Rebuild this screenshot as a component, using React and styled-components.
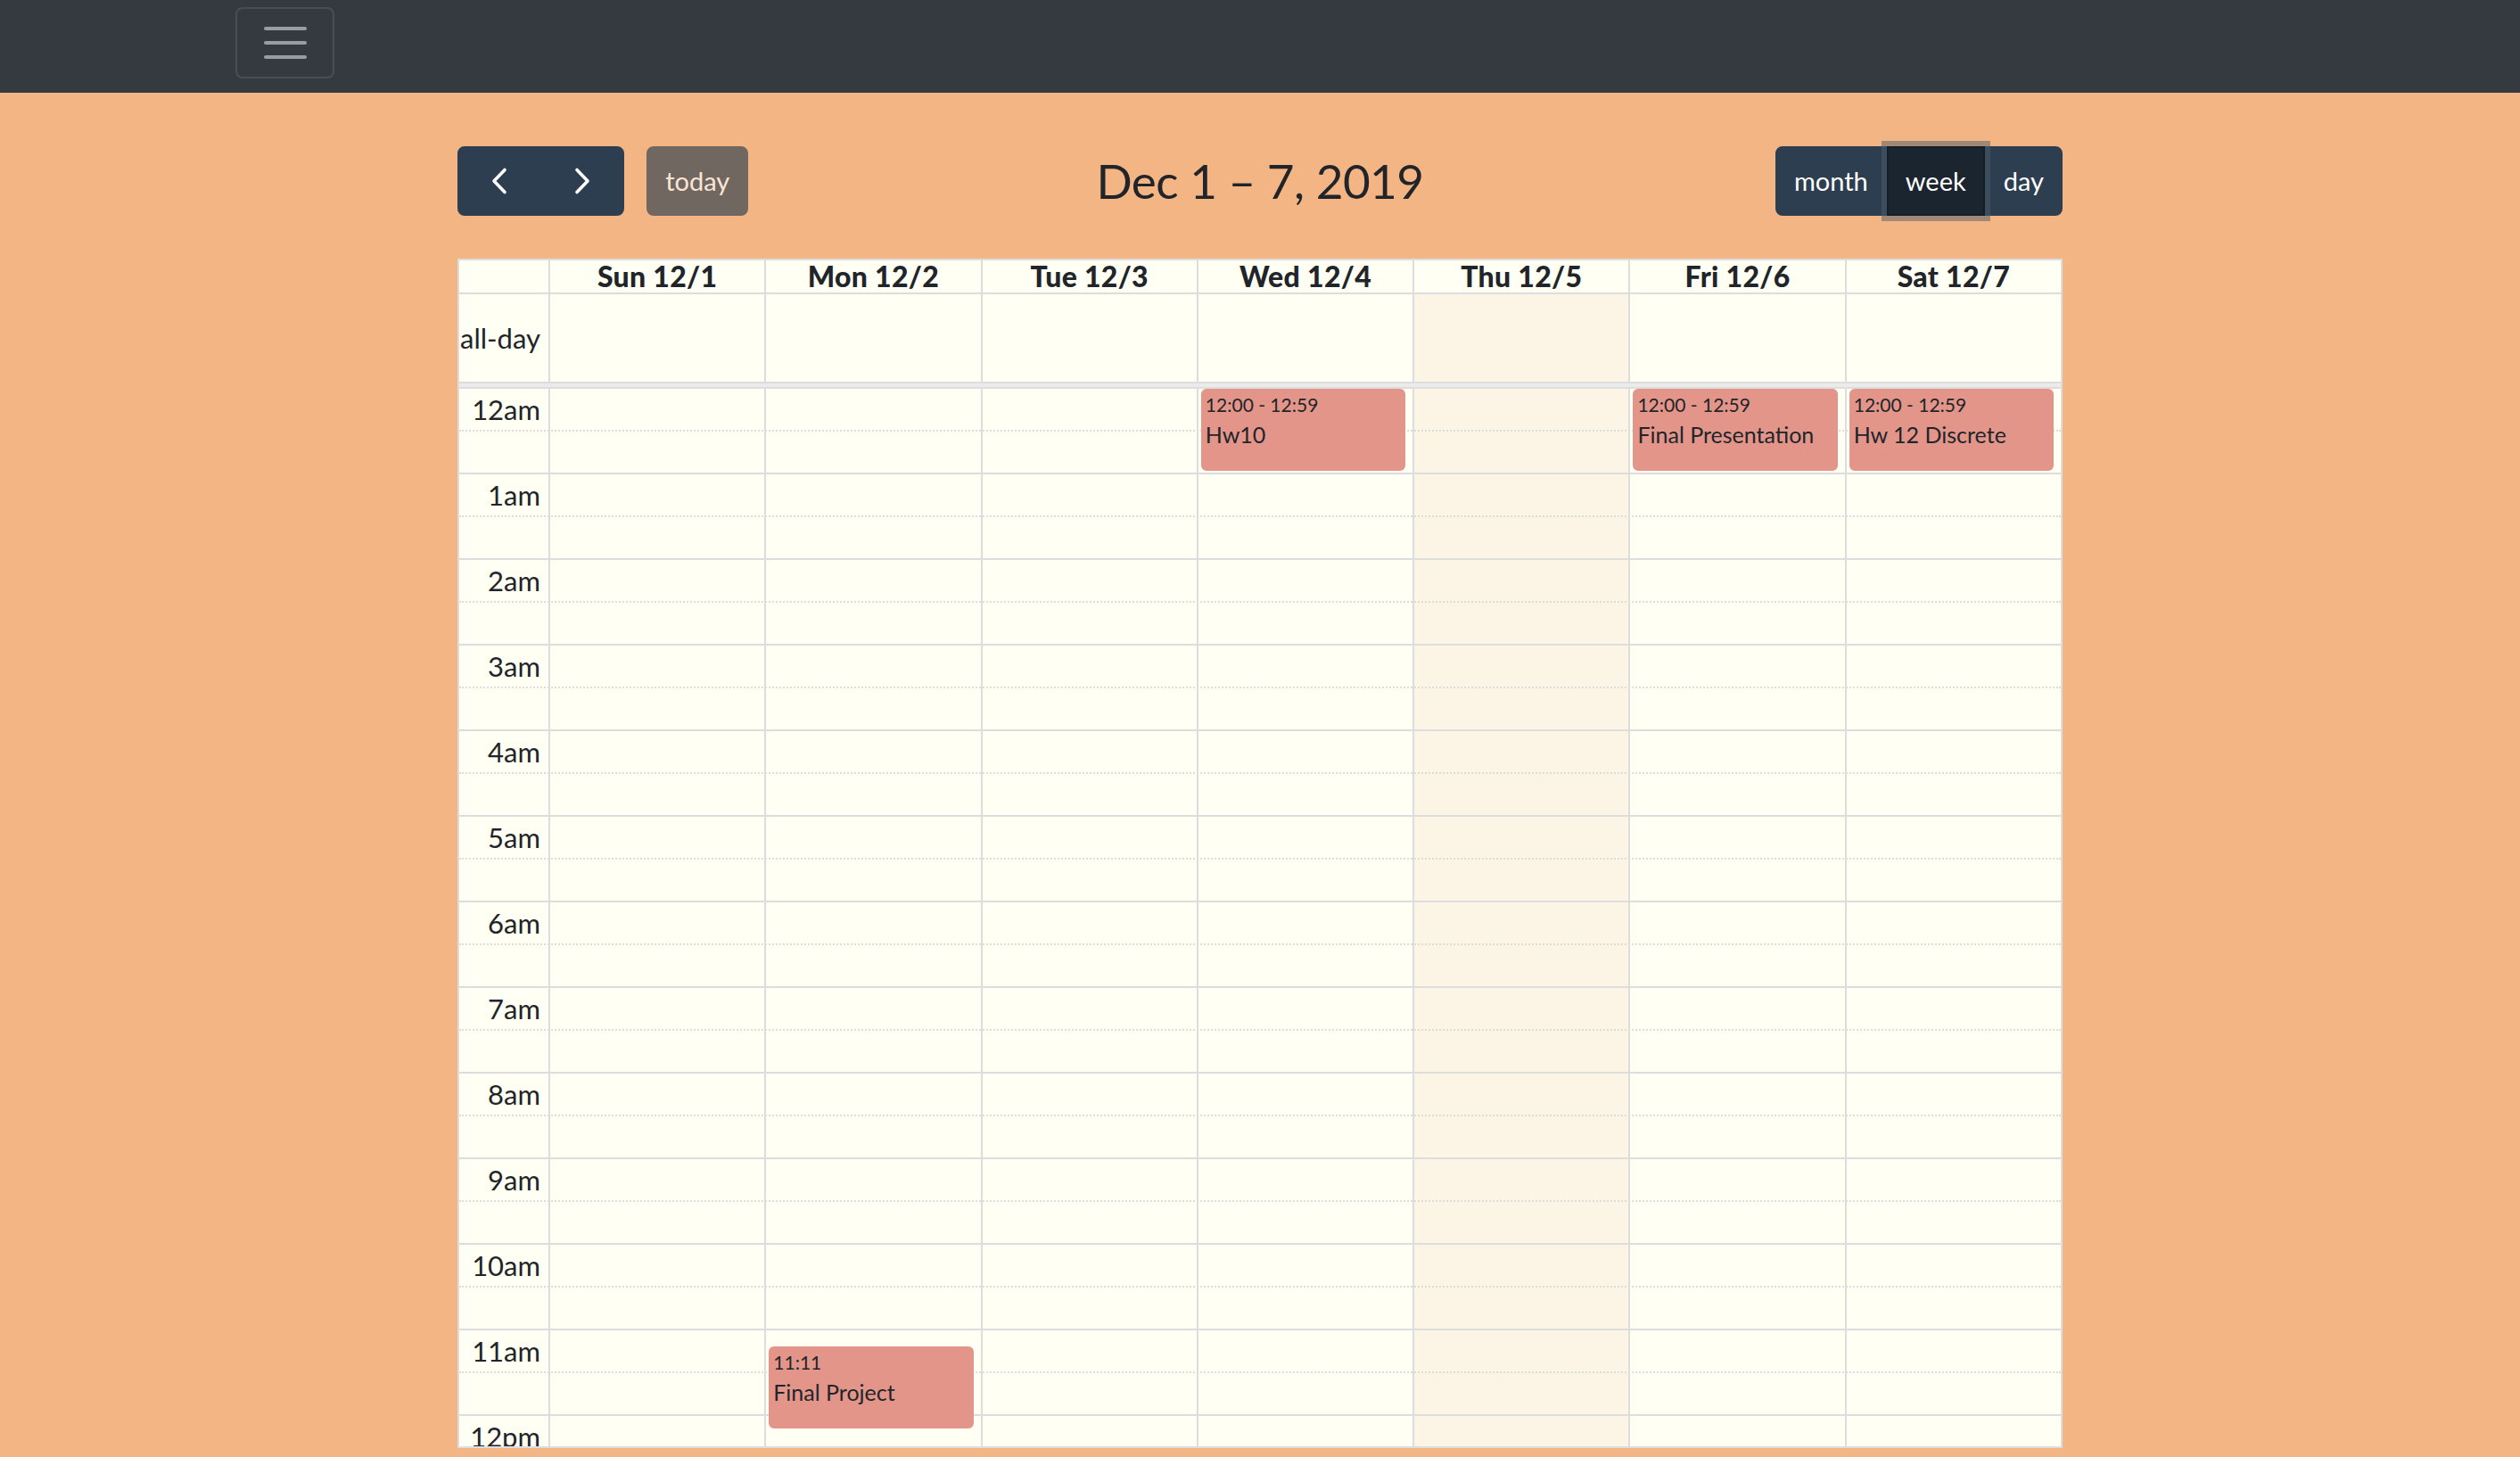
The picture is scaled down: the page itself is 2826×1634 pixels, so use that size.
import React from 'react';
import styled, { createGlobalStyle } from 'styled-components';

const GlobalStyle = createGlobalStyle`
  html, body { margin: 0; padding: 0; }
  body {
    background: #f3b583;
    font-family: Lato, "Liberation Sans", sans-serif;
    color: #212529;
  }
  *, *::before, *::after { box-sizing: border-box; }
`;

const Navbar = styled.nav`
  height: 104px;
  background: #343a40;
  display: flex;
  align-items: flex-start;
  padding: 8px 0 0 264px;
`;

const Toggler = styled.button`
  width: 111px;
  height: 80px;
  padding: 0;
  border: 2px solid rgba(255, 255, 255, 0.1);
  border-radius: 8px;
  background: transparent;
  display: flex;
  align-items: center;
  justify-content: center;
`;

const Calendar = styled.main`
  width: 1800px;
  margin: 60px auto 0;
`;

const Toolbar = styled.div`
  display: grid;
  grid-template-columns: 1fr auto 1fr;
  align-items: center;
  margin-bottom: 48px;
`;

const ToolbarSide = styled.div`
  display: flex;
  align-items: center;
  gap: 25px;
  justify-content: ${p => (p.$end ? 'flex-end' : 'flex-start')};
`;

const Title = styled.h2`
  margin: 0;
  font-size: 53px;
  font-weight: 400;
  line-height: 78px;
  color: #212529;
  letter-spacing: -0.5px;
`;

const ButtonGroup = styled.div`
  display: flex;
`;

const Button = styled.button`
  position: relative;
  font-family: inherit;
  font-size: 29px;
  line-height: 48px;
  height: 78px;
  padding: 12.8px ${p => (p.$icon ? '20.8px' : '19px')};
  border: 2px solid ${p => (p.$active ? '#151e27' : '#2c3e50')};
  background: ${p => (p.$active ? '#1a252f' : '#2c3e50')};
  color: #fff;
  border-radius: ${p =>
    p.$single ? '8px' : p.$first ? '8px 0 0 8px' : p.$last ? '0 8px 8px 0' : '0'};
  opacity: ${p => (p.$disabled ? 0.65 : 1)};
  z-index: ${p => (p.$active ? 1 : 0)};
  box-shadow: ${p => (p.$active ? '0 0 0 6px rgba(76, 91, 106, 0.5)' : 'none')};
  display: flex;
  align-items: center;
  justify-content: center;
  cursor: pointer;
`;

const Table = styled.div`
  border: 2px solid #ddd;
  background: #fffff4;
`;

const Row = styled.div`
  display: grid;
  grid-template-columns: 100px repeat(7, 1fr);
  height: ${p => p.$h}px;
  border-bottom: ${p => (p.$line ? '2px solid #ddd' : 'none')};
`;

const HeadCell = styled.div`
  border-left: 2px solid #ddd;
  text-align: center;
  font-weight: 900;
  font-size: 32px;
  line-height: 36px;
  letter-spacing: 0.3px;
`;

const AxisLabel = styled.div`
  display: flex;
  align-items: center;
  justify-content: flex-end;
  padding-right: 9px;
  font-size: 31px;
  white-space: nowrap;
`;

const DayCell = styled.div`
  position: relative;
  border-left: 2px solid #ddd;
  background: ${p => (p.$today ? '#fcf5e5' : 'transparent')};
`;

const Divider = styled.div`
  height: 8px;
  border-top: 2px solid #ddd;
  border-bottom: 2px solid #ddd;
  background: #ebebeb;
`;

const Scroller = styled.div`
  position: relative;
  height: 1186px;
  overflow: hidden;
`;

const ColumnLayer = styled.div`
  position: absolute;
  inset: 0;
  display: grid;
  grid-template-columns: 100px repeat(7, 1fr);
  z-index: ${p => p.$z};
  pointer-events: ${p => (p.$z > 1 ? 'none' : 'auto')};
`;

const Slats = styled.div`
  position: relative;
  z-index: 1;
`;

const Slot = styled.div`
  height: 48px;
  display: grid;
  grid-template-columns: 100px 1fr;
  border-bottom: 2px ${p => (p.$half ? 'dotted' : 'solid')} #ddd;
`;

const EventColumn = styled.div`
  position: relative;
`;

const Event = styled.div`
  position: absolute;
  left: 5px;
  right: 8px;
  background: #e4958a;
  border: 2px solid #e4958a;
  border-radius: 6px;
  padding: 0 3px;
  color: #212529;
  overflow: hidden;
`;

const EventTime = styled.div`
  font-size: 21px;
  line-height: 31px;
  white-space: nowrap;
`;

const EventTitle = styled.div`
  font-size: 25px;
  line-height: 36px;
  white-space: nowrap;
`;

const days = ['Sun 12/1', 'Mon 12/2', 'Tue 12/3', 'Wed 12/4', 'Thu 12/5', 'Fri 12/6', 'Sat 12/7'];
const TODAY = 4;
const HOUR = 96;

const hours = [
  '12am', '1am', '2am', '3am', '4am', '5am', '6am', '7am', '8am', '9am', '10am', '11am',
  '12pm', '1pm', '2pm',
];

const events = [
  { day: 3, start: 0, end: 59, time: '12:00 - 12:59', title: 'Hw10' },
  { day: 5, start: 0, end: 59, time: '12:00 - 12:59', title: 'Final Presentation' },
  { day: 6, start: 0, end: 59, time: '12:00 - 12:59', title: 'Hw 12 Discrete' },
  { day: 1, start: 671, end: 730, time: '11:11', title: 'Final Project' },
];

const Chevron = ({ dir }) => (
  <svg width="48" height="48" viewBox="0 0 48 48" fill="none">
    <path
      d={dir === 'left' ? 'M30 11.5 L18 24 L30 36.5' : 'M18 11.5 L30 24 L18 36.5'}
      stroke="#fff"
      strokeWidth="3.6"
      strokeLinecap="round"
      strokeLinejoin="round"
    />
  </svg>
);

const Hamburger = () => (
  <svg width="60" height="60" viewBox="0 0 30 30">
    <path
      d="M4 7h22M4 15h22M4 23h22"
      stroke="rgba(255,255,255,0.5)"
      strokeWidth="2"
      strokeLinecap="round"
    />
  </svg>
);

export default function App() {
  return (
    <>
      <GlobalStyle />
      <Navbar>
        <Toggler aria-label="Toggle navigation">
          <Hamburger />
        </Toggler>
      </Navbar>
      <Calendar>
        <Toolbar>
          <ToolbarSide>
            <ButtonGroup>
              <Button $first $icon aria-label="prev">
                <Chevron dir="left" />
              </Button>
              <Button $last $icon aria-label="next">
                <Chevron dir="right" />
              </Button>
            </ButtonGroup>
            <Button $single $disabled>today</Button>
          </ToolbarSide>
          <Title>Dec 1 – 7, 2019</Title>
          <ToolbarSide $end>
            <ButtonGroup>
              <Button $first>month</Button>
              <Button $active>week</Button>
              <Button $last>day</Button>
            </ButtonGroup>
          </ToolbarSide>
        </Toolbar>

        <Table>
          <Row $h={38} $line>
            <div />
            {days.map(d => (
              <HeadCell key={d}>{d}</HeadCell>
            ))}
          </Row>
          <Row $h={98}>
            <AxisLabel>all-day</AxisLabel>
            {days.map((d, i) => (
              <DayCell key={d} $today={i === TODAY} />
            ))}
          </Row>
          <Divider />
          <Scroller>
            <ColumnLayer $z={0}>
              <div />
              {days.map((d, i) => (
                <DayCell key={d} $today={i === TODAY} />
              ))}
            </ColumnLayer>
            <Slats>
              {hours.map(h => (
                <React.Fragment key={h}>
                  <Slot $half>
                    <AxisLabel>{h}</AxisLabel>
                    <div />
                  </Slot>
                  <Slot>
                    <div />
                    <div />
                  </Slot>
                </React.Fragment>
              ))}
            </Slats>
            <ColumnLayer $z={2}>
              <div />
              {days.map((d, i) => (
                <EventColumn key={d}>
                  {events
                    .filter(e => e.day === i)
                    .map(e => (
                      <Event
                        key={e.title}
                        style={{
                          top: (e.start * HOUR) / 60,
                          height: ((e.end - e.start) * HOUR) / 60 - 2,
                        }}
                      >
                        <EventTime>{e.time}</EventTime>
                        <EventTitle>{e.title}</EventTitle>
                      </Event>
                    ))}
                </EventColumn>
              ))}
            </ColumnLayer>
          </Scroller>
        </Table>
      </Calendar>
    </>
  );
}
